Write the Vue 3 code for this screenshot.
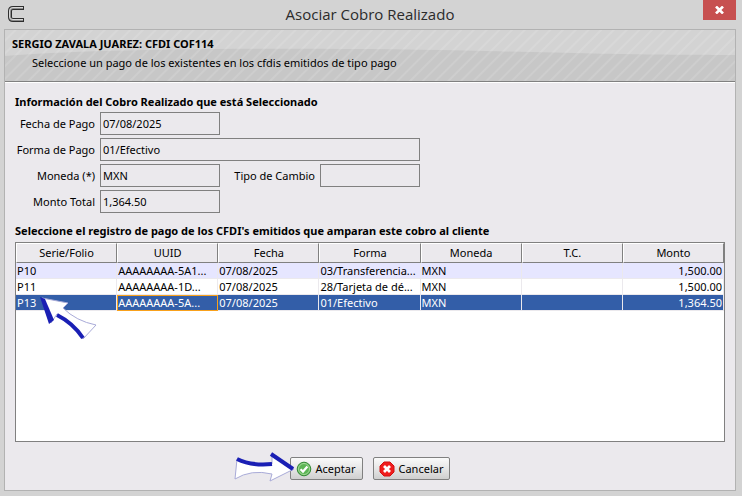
<template>
  <div class="window">
    <header class="title-bar">
      <div class="app-icon">
        <svg viewBox="0 0 18 18" width="18" height="18">
          <path d="M17 3 H6 Q3 3 3 6 V12 Q3 15 6 15 H17" fill="none" stroke="#2e2e2e" stroke-width="4" />
          <path d="M16 3 H6 Q3 3 3 6 V12 Q3 15 6 15 H16" fill="none" stroke="#8c8c8c" stroke-width="2" />
          <path d="M16 2.5 H6 Q2.5 2.5 2.5 6 V12 Q2.5 14.5 6 14.5 H16" fill="none" stroke="#d8d8d8" stroke-width="1" />
        </svg>
      </div>
      <h1>Asociar Cobro Realizado</h1>
      <button type="button" class="close-btn" aria-label="Cerrar">
        <svg viewBox="0 0 9 8" width="9" height="8">
          <path d="M1 0.5 L8 7.5 M8 0.5 L1 7.5" stroke="#fff" stroke-width="2.6" />
        </svg>
      </button>
    </header>

    <main class="panel">
      <div class="banner">
        <svg class="banner-wave" viewBox="0 0 730 51" preserveAspectRatio="none">
          <path d="M0 26 C90 18 330 17 480 21 S680 25 730 25 V51 H0 Z" fill="#c7c7c7" />
        </svg>
        <h2>SERGIO ZAVALA JUAREZ: CFDI COF114</h2>
        <p>Seleccione un pago de los existentes en los cfdis emitidos de tipo pago</p>
      </div>

      <div class="content">
        <h3>Información del Cobro Realizado que está Seleccionado</h3>
        <div class="form">
          <div class="form-row">
            <label for="fecha">Fecha de Pago</label>
            <input id="fecha" v-model="cobro.fecha" type="text" class="short" readonly>
          </div>
          <div class="form-row">
            <label for="forma">Forma de Pago</label>
            <input id="forma" v-model="cobro.forma" type="text" class="long" readonly>
          </div>
          <div class="form-row">
            <label for="moneda">Moneda (*)</label>
            <input id="moneda" v-model="cobro.moneda" type="text" class="short" readonly>
            <label for="cambio" class="second">Tipo de Cambio</label>
            <input id="cambio" v-model="cobro.tipoCambio" type="text" class="rate" readonly>
          </div>
          <div class="form-row">
            <label for="monto">Monto Total</label>
            <input id="monto" v-model="cobro.monto" type="text" class="short" readonly>
          </div>
        </div>

        <h3>Seleccione el registro de pago de los CFDI's emitidos que amparan este cobro al cliente</h3>
        <div class="table-box">
          <table>
            <thead>
              <tr>
                <th v-for="col in columns" :key="col">{{ col }}</th>
              </tr>
            </thead>
            <tbody>
              <tr
                v-for="pago in pagos"
                :key="pago.folio"
                :class="{ selected: pago.folio === selected }"
                @click="selected = pago.folio"
              >
                <td>{{ pago.folio }}</td>
                <td class="uuid">{{ pago.uuid }}</td>
                <td>{{ pago.fecha }}</td>
                <td>{{ pago.forma }}</td>
                <td>{{ pago.moneda }}</td>
                <td>{{ pago.tc }}</td>
                <td class="amount">{{ pago.monto }}</td>
              </tr>
            </tbody>
          </table>
          <svg class="row-arrow" viewBox="0 0 60 46" width="60" height="46">
            <path d="M4 3 L30 8 L25 13 Q38 26 58 30 L45 44 Q36 30 19 19 L13 28 Z" fill="#fff" stroke="#a9abd8" stroke-width="1" />
            <path d="M2 2 L7 4 L16 25 L11 29 Z" fill="#1a1fb4" />
            <path d="M19 20 Q35 28 45 43" fill="none" stroke="#1a1fb4" stroke-width="4" />
          </svg>
        </div>

        <div class="actions">
          <button type="button" class="btn">
            <svg viewBox="0 0 16 16" width="16" height="16">
              <circle cx="8" cy="8" r="6.8" fill="#5cb555" stroke="#348a37" stroke-width="1" />
              <circle cx="8" cy="8" r="5.5" fill="none" stroke="#a5d99b" stroke-width="1" />
              <path d="M4.5 8.2 L7 10.6 L11.4 5.6" fill="none" stroke="#fff" stroke-width="2.2" />
            </svg>
            Aceptar
            <svg class="btn-arrow" viewBox="0 0 62 32" width="62" height="32">
              <path d="M4 8 Q20 16 39 13 V3 L61 18 L37 30 L39 23 Q18 18 2 28 Z" fill="#fff" stroke="#a9abd8" stroke-width="1" />
              <path d="M4 8 Q18 15 39 13" fill="none" stroke="#1a1fb4" stroke-width="4" />
              <path d="M38 3 L60 18" fill="none" stroke="#1a1fb4" stroke-width="4" />
            </svg>
          </button>
          <button type="button" class="btn">
            <svg viewBox="0 0 16 16" width="16" height="16">
              <path d="M5 1 H11 L15 5 V11 L11 15 H5 L1 11 V5 Z" fill="#f01d1d" stroke="#cf1212" stroke-width="1" />
              <path d="M5 5 L11 11 M11 5 L5 11" stroke="#fff" stroke-width="2.8" />
            </svg>
            Cancelar
          </button>
        </div>
      </div>
    </main>
  </div>
</template>

<script setup>
import { ref } from 'vue'

const cobro = ref({
  fecha: '07/08/2025',
  forma: '01/Efectivo',
  moneda: 'MXN',
  tipoCambio: '',
  monto: '1,364.50'
})

const columns = ['Serie/Folio', 'UUID', 'Fecha', 'Forma', 'Moneda', 'T.C.', 'Monto']

const pagos = [
  { folio: 'P10', uuid: 'AAAAAAAA-5A1...', fecha: '07/08/2025', forma: '03/Transferencia...', moneda: 'MXN', tc: '', monto: '1,500.00' },
  { folio: 'P11', uuid: 'AAAAAAAA-1D...', fecha: '07/08/2025', forma: '28/Tarjeta de dé...', moneda: 'MXN', tc: '', monto: '1,500.00' },
  { folio: 'P13', uuid: 'AAAAAAAA-5A...', fecha: '07/08/2025', forma: '01/Efectivo', moneda: 'MXN', tc: '', monto: '1,364.50' }
]

const selected = ref('P13')
</script>

<style>
body {
  background: #d3d3d3;
}
</style>

<style scoped>
.window {
  display: flex;
  flex-direction: column;
  box-sizing: border-box;
  min-height: 100vh;
  padding: 0 6px 5px 4px;
  background: #d3d3d3;
  color: #000;
  font-family: "Noto Sans", "Open Sans", sans-serif;
  font-size: 11px;
  line-height: 16px;
}

h1,
h2,
h3,
p {
  margin: 0;
}

.title-bar {
  display: flex;
  align-items: flex-start;
  height: 29px;
}

.app-icon {
  box-sizing: border-box;
  flex: none;
  width: 33px;
  padding: 5px 0 0 3px;
}

.title-bar h1 {
  flex: 1;
  padding-top: 3px;
  text-align: center;
  font-family: "Open Sans", "Noto Sans", sans-serif;
  font-size: 15px;
  font-weight: 400;
  line-height: 22px;
  color: #2b2b2b;
}

.close-btn {
  display: flex;
  align-items: center;
  justify-content: center;
  width: 33px;
  height: 20px;
  padding: 0;
  border: none;
  background: #c75050;
}

.panel {
  display: flex;
  flex: 1;
  flex-direction: column;
  border: 1px solid #b2b2b2;
  background: #ebe9ed;
}

.banner {
  position: relative;
  height: 51px;
  border-bottom: 1px solid #808080;
  box-shadow: 0 1px 0 #fff;
  background: #d3d3d3;
}

.banner::after {
  content: "";
  position: absolute;
  inset: 0;
  background: repeating-linear-gradient(135deg, transparent 0 6px, rgba(255, 255, 255, 0.12) 7px 8px, transparent 9px);
}

.banner-wave {
  position: absolute;
  inset: 0;
  width: 100%;
  height: 100%;
}

.banner h2,
.banner p {
  position: relative;
  z-index: 1;
}

.banner h2 {
  padding: 6px 0 0 7px;
  font-size: 11px;
  line-height: 16px;
}

.banner p {
  padding: 3px 0 0 27px;
}

.content {
  display: flex;
  flex: 1;
  flex-direction: column;
  padding: 12px 10px 10px;
}

.content h3 {
  font-size: 11px;
  line-height: 16px;
}

.form {
  display: flex;
  flex-direction: column;
  gap: 3px;
  padding: 2px 0 10px;
}

.form-row {
  display: flex;
  align-items: center;
}

.form-row label {
  width: 80px;
  margin-right: 5px;
  text-align: right;
  white-space: nowrap;
}

.form-row .second {
  width: 95px;
}

.form-row input {
  box-sizing: border-box;
  height: 23px;
  padding: 0 2px;
  border: 1px solid #808080;
  background: #ebe9ed;
  color: #000;
  font: inherit;
  outline: none;
}

.short {
  width: 120px;
}

.long {
  width: 320px;
}

.rate {
  width: 100px;
}

.table-box {
  position: relative;
  flex: 1;
  margin-top: 3px;
  border: 1px solid #808080;
  background: #fff;
}

table {
  width: 100%;
  border-collapse: separate;
  border-spacing: 0;
  table-layout: fixed;
}

th {
  height: 18px;
  padding: 0;
  border-top: 1px solid #fff;
  border-left: 1px solid #fff;
  border-right: 1px solid #808080;
  border-bottom: 1px solid #808080;
  background: #ebe9ed;
  font-weight: 400;
}

td {
  height: 15px;
  padding: 0 1px;
  border-right: 1px solid #ebe9ed;
  border-bottom: 1px solid #ebe9ed;
  line-height: 15px;
  overflow: hidden;
  white-space: nowrap;
}

tbody tr:nth-child(odd) {
  background: #e6e6ff;
}

tbody tr.selected {
  background: #335ea8;
  color: #fff;
}

.selected .uuid {
  height: 14px;
  padding: 0;
  border: 1px solid #f9a11b;
  line-height: 14px;
}

td.amount {
  text-align: right;
}

.row-arrow {
  position: absolute;
  top: 52px;
  left: 22px;
}

.actions {
  display: flex;
  justify-content: center;
  gap: 10px;
  padding-top: 15px;
}

.btn {
  position: relative;
  display: flex;
  align-items: center;
  gap: 4px;
  height: 23px;
  padding: 0 6px 0 5px;
  border: 1px solid #808080;
  border-radius: 2px;
  background: linear-gradient(#fafafa, #e6e6e6 50%, #cfcfcf);
  color: #000;
  font: inherit;
}

.btn-arrow {
  position: absolute;
  top: -7px;
  left: -58px;
}
</style>
